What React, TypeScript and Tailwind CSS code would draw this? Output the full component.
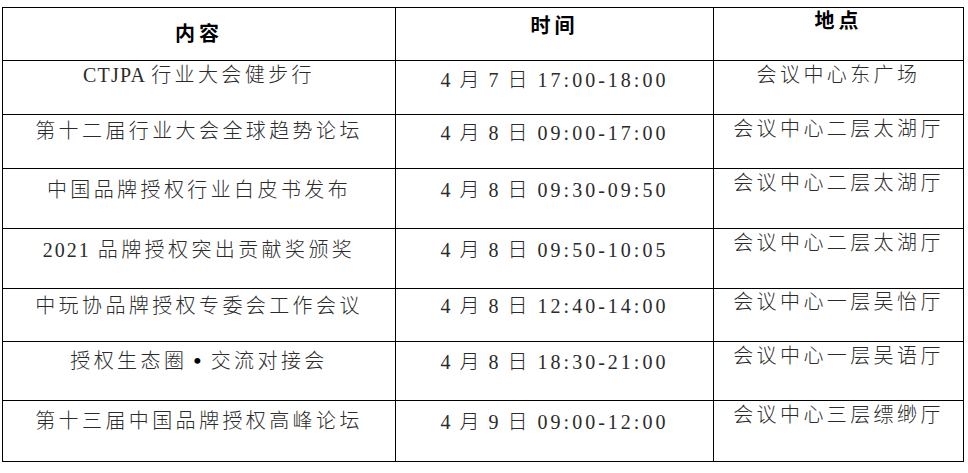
import React from "react";

type Cell = {
  text: string;
  pt: string;
  cjk?: string;
  latin?: string;
};

type Row = {
  h: string;
  cells: [Cell, Cell, Cell];
};

const NORMAL = "tracking-[3.4px]";

// time cells share the same spacing: narrow prefix, wider clock digits
function timeCell(day: string, range: string, pt: string): Cell {
  return { text: `4 月 ${day} 日 ${range}`, pt, cjk: "tracking-[2px]", latin: "tracking-[2px]" };
}

const header: [string, string, string] = ["内容", "时间", "地点"];
const headerPt = ["pt-[16px]", "pt-[8px]", "pt-[3px]"];

const rows: Row[] = [
  {
    h: "h-[54px]",
    cells: [
      { text: "CTJPA 行业大会健步行", pt: "pt-[4px]", cjk: NORMAL, latin: "tracking-[1.2px]" },
      timeCell("7", "17:00-18:00", "pt-[9px]"),
      { text: "会议中心东广场", pt: "pt-[4px]", cjk: NORMAL },
    ],
  },
  {
    h: "h-[54px]",
    cells: [
      { text: "第十二届行业大会全球趋势论坛", pt: "pt-[6px]", cjk: NORMAL },
      timeCell("8", "09:00-17:00", "pt-[8px]"),
      { text: "会议中心二层太湖厅", pt: "pt-[4px]", cjk: NORMAL },
    ],
  },
  {
    h: "h-[60px]",
    cells: [
      { text: "中国品牌授权行业白皮书发布", pt: "pt-[11px]", cjk: NORMAL },
      timeCell("8", "09:30-09:50", "pt-[11px]"),
      { text: "会议中心二层太湖厅", pt: "pt-[4px]", cjk: NORMAL },
    ],
  },
  {
    h: "h-[60px]",
    cells: [
      { text: "2021 品牌授权突出贡献奖颁奖", pt: "pt-[11px]", cjk: NORMAL, latin: "tracking-[2px]" },
      timeCell("8", "09:50-10:05", "pt-[11px]"),
      { text: "会议中心二层太湖厅", pt: "pt-[4px]", cjk: NORMAL },
    ],
  },
  {
    h: "h-[53px]",
    cells: [
      { text: "中玩协品牌授权专委会工作会议", pt: "pt-[7px]", cjk: NORMAL },
      timeCell("8", "12:40-14:00", "pt-[7px]"),
      { text: "会议中心一层吴怡厅", pt: "pt-[3px]", cjk: NORMAL },
    ],
  },
  {
    h: "h-[59px]",
    cells: [
      { text: "授权生态圈•交流对接会", pt: "pt-[9px]", cjk: NORMAL },
      timeCell("8", "18:30-21:00", "pt-[10px]"),
      { text: "会议中心一层吴语厅", pt: "pt-[4px]", cjk: NORMAL },
    ],
  },
  {
    h: "h-[61px]",
    cells: [
      { text: "第十三届中国品牌授权高峰论坛", pt: "pt-[10px]", cjk: NORMAL },
      timeCell("9", "09:00-12:00", "pt-[11px]"),
      { text: "会议中心三层缥缈厅", pt: "pt-[4px]", cjk: NORMAL },
    ],
  },
];

function Txt({ text, cjk, latin }: { text: string; cjk?: string; latin?: string }) {
  const parts = text.split(/([\u4e00-\u9fff]+|•)/).filter((p) => p !== "");
  return (
    <span className="whitespace-pre">
      {parts.map((p, i) => {
        if (p === "•") {
          // full-width bullet slot, like the song font renders it
          return (
            <span key={i} className="inline-block w-[23.4px] pr-[3.4px] text-center text-[22px] font-bold text-black">
              •
            </span>
          );
        }
        const isCjk = /[\u4e00-\u9fff]/.test(p);
        if (!isCjk && /\d{2}:\d{2}/.test(p)) {
          // clock range gets its own wider spacing
          return (
            <span key={i} className="tracking-[3px]">
              {p}
            </span>
          );
        }
        return (
          <span key={i} className={isCjk ? cjk : latin}>
            {p}
          </span>
        );
      })}
    </span>
  );
}

const cellBase = "border-r border-b border-black flex justify-center items-start";

export default function App() {
  return (
    <div className="bg-white w-[968px] h-[473px] pt-[7px] pl-[2px] font-['Liberation_Serif','Noto_Sans_CJK_SC',serif] text-[20px] leading-[20px] text-[#2b2b2b] font-light">
      <div className="grid grid-cols-[393px_318px_250px] w-[962px] border-t border-l border-black">
        {header.map((h, i) => (
          <div key={h} className={`${cellBase} h-[53px] ${headerPt[i]}`}>
            <span className="font-bold tracking-[4px] text-black">{h}</span>
          </div>
        ))}
        {rows.map((row, r) =>
          row.cells.map((c, i) => (
            <div key={`${r}-${i}`} className={`${cellBase} ${row.h} ${c.pt}`}>
              <Txt text={c.text} cjk={c.cjk} latin={c.latin} />
            </div>
          ))
        )}
      </div>
    </div>
  );
}
